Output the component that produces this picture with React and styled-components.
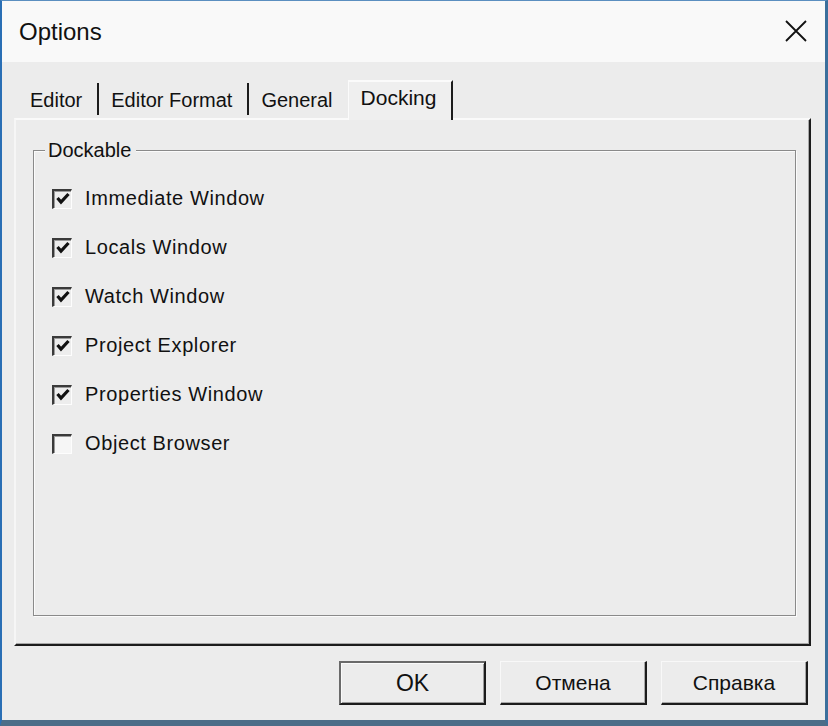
import React from 'react'
import styled, { createGlobalStyle } from 'styled-components'

const GlobalStyle = createGlobalStyle`
  html, body {
    margin: 0;
    padding: 0;
    background: #ececec;
  }
  * {
    box-sizing: border-box;
  }
`

const Window = styled.div`
  width: 828px;
  height: 726px;
  display: flex;
  flex-direction: column;
  border-left: 2px solid #2a6fb5;
  border-right: 3px solid #3b6f9c;
  border-top: 1px solid #5b8fc0;
  border-bottom: 6px solid #4c6d88;
  background: #ececec;
  font-family: 'Liberation Sans', Arial, sans-serif;
  color: #111;
`

const TitleBar = styled.div`
  height: 61px;
  flex: none;
  display: flex;
  align-items: center;
  justify-content: space-between;
  padding: 0 17px 0 17px;
  background: #f9f9f9;
  font-size: 24px;
`

const CloseButton = styled.button`
  width: 24px;
  height: 24px;
  padding: 0;
  border: none;
  background: none;
  display: flex;
  align-items: center;
  justify-content: center;
  margin-bottom: 2px;
`

const Body = styled.div`
  flex: 1;
  display: flex;
  flex-direction: column;
  padding: 16px 14px 0 12px;
`

const TabStrip = styled.div`
  display: flex;
  align-items: flex-end;
  height: 40px;
  padding-left: 4px;
`

const Tab = styled.div`
  display: flex;
  font-size: 20px;
  position: relative;
  ${p => p.active
    ? `
      height: 40px;
      align-items: flex-start;
      padding: 4px 15px 0 12px;
      margin-left: 3px;
      margin-bottom: -2px;
      background: #efefef;
      border-top: 2px solid #fbfbfb;
      border-left: 1px solid #fbfbfb;
      border-right: 2px solid #1c1c1c;
      font-size: 21px;
      z-index: 1;
    `
    : `
      height: 32px;
      align-items: center;
      padding: 2px ${p.divider ? '15px' : '12px'} 0 12px;
      margin-bottom: 3px;
      border-right: ${p.divider ? '2px solid #1c1c1c' : 'none'};
    `}
`

const Panel = styled.div`
  height: 528px;
  flex: none;
  display: flex;
  flex-direction: column;
  background: #ececec;
  border-top: 2px solid #fafafa;
  border-left: 2px solid #f6f6f6;
  border-right: 2px solid #1c1c1c;
  border-bottom: 2px solid #1c1c1c;
  box-shadow: inset -1px -1px 0 #a8a8a8;
  padding: 18px 13px 28px 17px;
`

const GroupBox = styled.fieldset`
  flex: 1;
  margin: 0;
  padding: 0;
  min-width: 0;
  border: 1px solid #8a8a8a;
  box-shadow: 1px 1px 0 #fbfbfb, inset 1px 1px 0 #fbfbfb;
`

const Legend = styled.legend`
  margin-left: 11px;
  padding: 0 5px 0 3px;
  font-size: 20px;
  line-height: 24px;
  background: #ececec;
`

const OptionList = styled.div`
  display: flex;
  flex-direction: column;
  padding: 12px 0 0 18px;
`

const OptionRow = styled.label`
  height: 49px;
  display: flex;
  align-items: center;
  gap: 13px;
  font-size: 20px;
  letter-spacing: 0.6px;
`

const Box = styled.span`
  width: 20px;
  height: 20px;
  flex: none;
  display: flex;
  align-items: center;
  justify-content: center;
  background: ${p => (p.checked ? '#ededed' : '#f6f6f6')};
  border-top: 2px solid #3a3a3a;
  border-left: 2px solid #3a3a3a;
  border-right: 1px solid #fdfdfd;
  border-bottom: 1px solid #fdfdfd;
  box-shadow: inset 1px 1px 0 #9a9a9a;
`

const ButtonBar = styled.div`
  flex: 1;
  display: flex;
  justify-content: flex-end;
  align-items: flex-start;
  gap: 14px;
  padding: 15px 3px 0 0;
`

const Button = styled.button`
  width: 147px;
  height: 44px;
  padding: 0;
  font-family: 'Liberation Sans', Arial, sans-serif;
  font-size: ${p => (p.primary ? '23px' : '21px')};
  color: #111;
  background: #ececec;
  border-top: ${p => (p.primary ? '2px solid #6a6a6a' : '1px solid #f8f8f8')};
  border-left: ${p => (p.primary ? '2px solid #6a6a6a' : '1px solid #f8f8f8')};
  border-right: 2px solid #1c1c1c;
  border-bottom: 2px solid #1c1c1c;
  box-shadow: ${p => (p.primary ? 'inset 1px 1px 0 #fafafa, inset -1px -1px 0 #9a9a9a' : 'inset -1px -1px 0 #a8a8a8')};
`

const options = [
  { label: 'Immediate Window', checked: true },
  { label: 'Locals Window', checked: true },
  { label: 'Watch Window', checked: true },
  { label: 'Project Explorer', checked: true },
  { label: 'Properties Window', checked: true },
  { label: 'Object Browser', checked: false }
]

const tabs = [
  { label: 'Editor', divider: true },
  { label: 'Editor Format', divider: true },
  { label: 'General' },
  { label: 'Docking', active: true }
]

const CheckMark = () => (
  <svg width='14' height='14' viewBox='0 0 14 14'>
    <path d='M1.5 6 L5 10 L12.5 2' fill='none' stroke='#111' strokeWidth='3.2' />
  </svg>
)

const CloseIcon = () => (
  <svg width='22' height='22' viewBox='0 0 22 22'>
    <path d='M1 1 L21 21 M21 1 L1 21' stroke='#111' strokeWidth='1.8' />
  </svg>
)

export default function App () {
  return (
    <>
      <GlobalStyle />
      <Window>
        <TitleBar>
          <span>Options</span>
          <CloseButton aria-label='Close'><CloseIcon /></CloseButton>
        </TitleBar>
        <Body>
          <TabStrip>
            {tabs.map(t => (
              <Tab key={t.label} active={t.active} divider={t.divider}>{t.label}</Tab>
            ))}
          </TabStrip>
          <Panel>
            <GroupBox>
              <Legend>Dockable</Legend>
              <OptionList>
                {options.map(o => (
                  <OptionRow key={o.label}>
                    <Box checked={o.checked}>{o.checked && <CheckMark />}</Box>
                    {o.label}
                  </OptionRow>
                ))}
              </OptionList>
            </GroupBox>
          </Panel>
          <ButtonBar>
            <Button primary>OK</Button>
            <Button>Отмена</Button>
            <Button>Справка</Button>
          </ButtonBar>
        </Body>
      </Window>
    </>
  )
}
